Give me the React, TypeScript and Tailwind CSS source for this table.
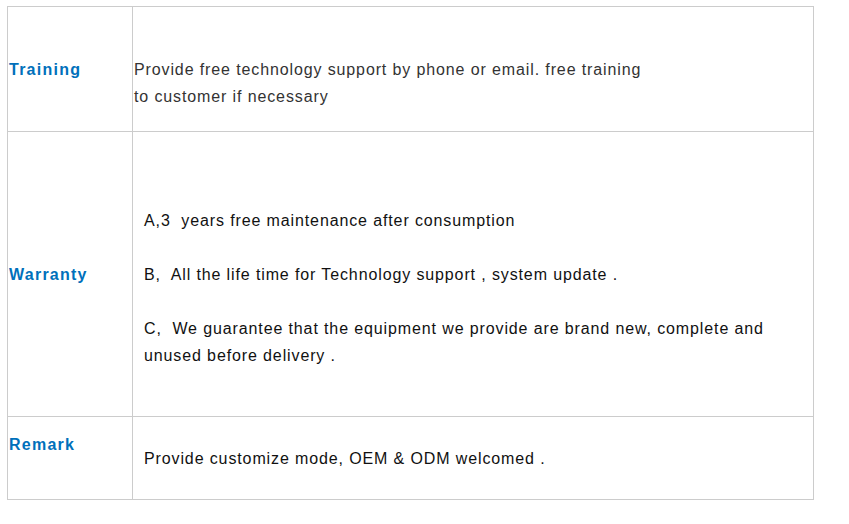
import React from "react";

export default function App() {
  return (
    <div className="w-[849px] h-[524px] bg-white pt-[6px] pl-[7px] font-['Liberation_Sans',Arial,sans-serif] text-[16px] leading-[27px] tracking-[0.88px]">
      <div className="w-[807px] border-t border-l border-[#cccccc]">
        {/* Training */}
        <div className="flex h-[125px] border-b border-[#cccccc]">
          <div className="w-[125px] shrink-0 border-r border-[#cccccc] pl-[1px] flex items-center">
            <span className="font-bold text-[#0070bb] tracking-[1.25px]">Training</span>
          </div>
          <div className="flex-1 border-r border-[#cccccc] pl-[1px] pt-[49px] text-[#333333]">
            Provide free technology support by phone or email. free training
            <br />
            to customer if necessary
          </div>
        </div>

        {/* Warranty */}
        <div className="flex h-[285px] border-b border-[#cccccc]">
          <div className="w-[125px] shrink-0 border-r border-[#cccccc] pl-[1px] flex items-center">
            <span className="font-bold text-[#0070bb] tracking-[1.25px]">Warranty</span>
          </div>
          <div className="flex-1 border-r border-[#cccccc] pl-[11px] pt-[75px] text-[#111111] flex flex-col gap-[27px]">
            <p className="whitespace-pre">A,3  years free maintenance after consumption</p>
            <p>B,&nbsp; All the life time for Technology support , system update .</p>
            <p>
              C,&nbsp; We guarantee that the equipment we provide are brand new, complete and
              <br />
              unused before delivery .
            </p>
          </div>
        </div>

        {/* Remark */}
        <div className="flex h-[83px] border-b border-[#cccccc]">
          <div className="w-[125px] shrink-0 border-r border-[#cccccc] pl-[1px] pt-[14px]">
            <span className="font-bold text-[#0070bb] tracking-[1.25px]">Remark</span>
          </div>
          <div className="flex-1 border-r border-[#cccccc] pl-[11px] flex items-center text-[#111111]">
            Provide customize mode, OEM &amp; ODM welcomed .
          </div>
        </div>
      </div>
    </div>
  );
}
